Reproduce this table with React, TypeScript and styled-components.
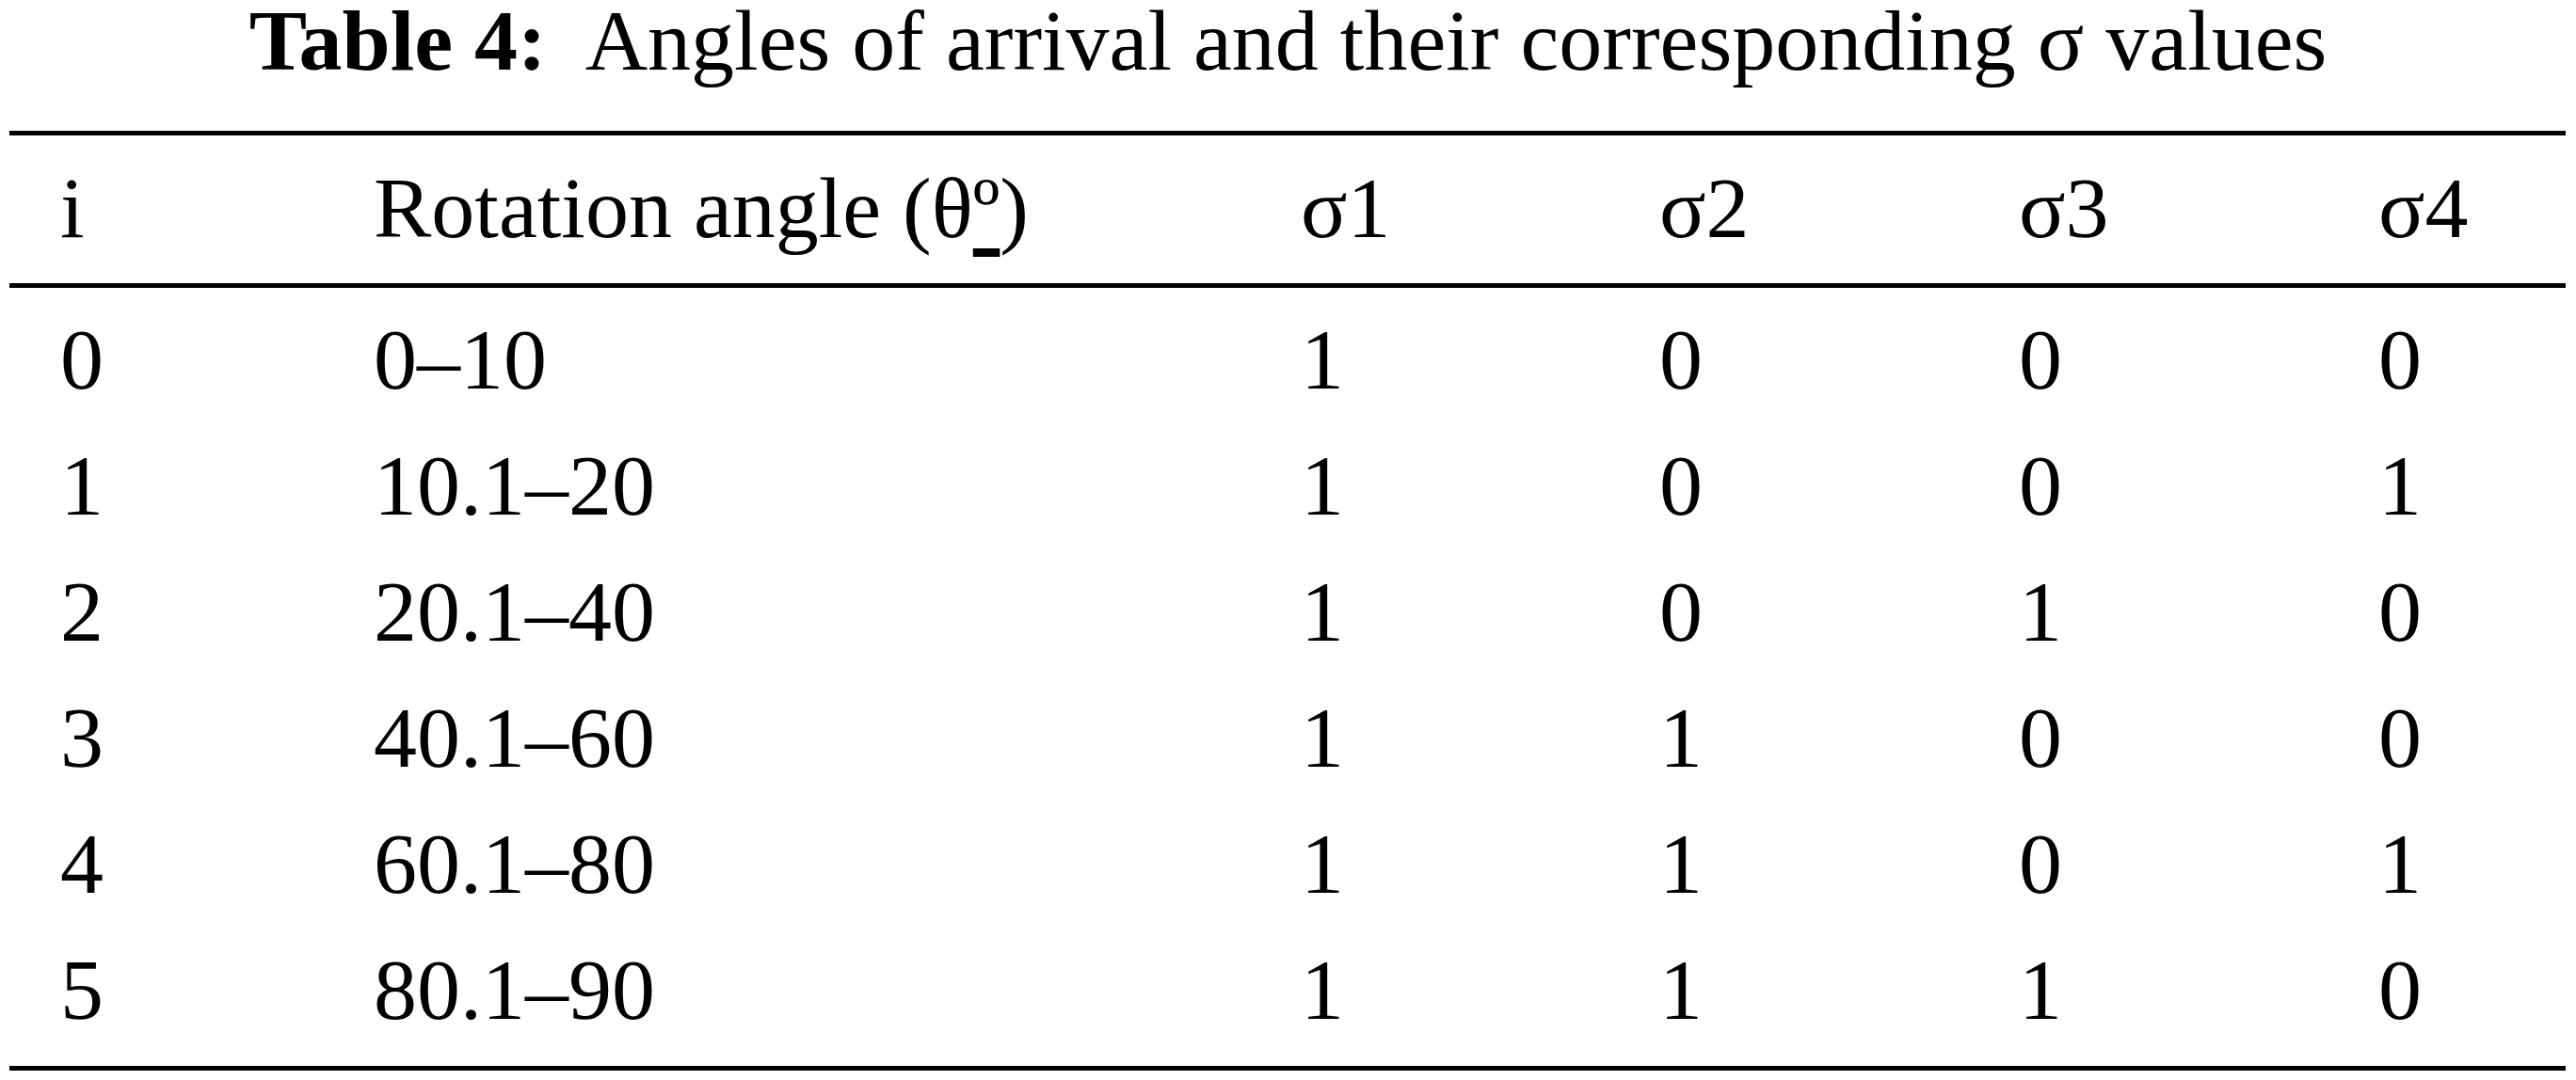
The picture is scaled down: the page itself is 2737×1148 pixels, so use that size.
import React from "react";
import styled, { createGlobalStyle } from "styled-components";

const GlobalStyle = createGlobalStyle`
  html, body {
    margin: 0;
    padding: 0;
    background: #ffffff;
  }
  body {
    font-family: "Liberation Serif", "Times New Roman", serif;
    color: #000000;
  }
`;

const Page = styled.div`
  width: 2737px;
  height: 1148px;
  background: #ffffff;
  overflow: hidden;
`;

const Caption = styled.div`
  font-size: 92px;
  line-height: 86px;
  text-align: center;
  white-space: pre;
  margin: 0 0 53px 0;
`;

const CaptionLabel = styled.span`
  font-weight: bold;
`;

const Table = styled.div`
  margin-left: 10px;
  width: 2716px;
  border-top: 5px solid #000;
  border-bottom: 5px solid #000;
  font-size: 92px;
`;

const HeadRow = styled.div`
  display: grid;
  grid-template-columns: 333px 985px 381px 382px 382px 1fr;
  line-height: 134px;
  padding: 10px 0 13px 0;
  border-bottom: 5px solid #000;
`;

const Body = styled.div`
  padding: 9px 0 14px 0;
`;

const Row = styled.div`
  display: grid;
  grid-template-columns: 333px 985px 381px 382px 382px 1fr;
  line-height: 134px;
`;

const Cell = styled.div`
  padding-left: 54px;
  white-space: nowrap;
`;

const Ordinal = styled.span`
  text-decoration: underline;
  text-decoration-thickness: 9px;
  text-underline-offset: 12px;
`;

const rows: string[][] = [
  ["0", "0\u201310", "1", "0", "0", "0"],
  ["1", "10.1\u201320", "1", "0", "0", "1"],
  ["2", "20.1\u201340", "1", "0", "1", "0"],
  ["3", "40.1\u201360", "1", "1", "0", "0"],
  ["4", "60.1\u201380", "1", "1", "0", "1"],
  ["5", "80.1\u201390", "1", "1", "1", "0"],
];

export default function App() {
  return (
    <Page>
      <GlobalStyle />
      <Caption>
        <CaptionLabel>Table 4:</CaptionLabel>
        {"  Angles of arrival and their corresponding \u03c3 values"}
      </Caption>
      <Table>
        <HeadRow>
          <Cell>i</Cell>
          <Cell>
            {"Rotation angle (\u03b8"}
            <Ordinal>{"\u00ba"}</Ordinal>
            {")"}
          </Cell>
          <Cell>{"\u03c31"}</Cell>
          <Cell>{"\u03c32"}</Cell>
          <Cell>{"\u03c33"}</Cell>
          <Cell>{"\u03c34"}</Cell>
        </HeadRow>
        <Body>
          {rows.map((r) => (
            <Row key={r[0]}>
              {r.map((c, i) => (
                <Cell key={i}>{c}</Cell>
              ))}
            </Row>
          ))}
        </Body>
      </Table>
    </Page>
  );
}
